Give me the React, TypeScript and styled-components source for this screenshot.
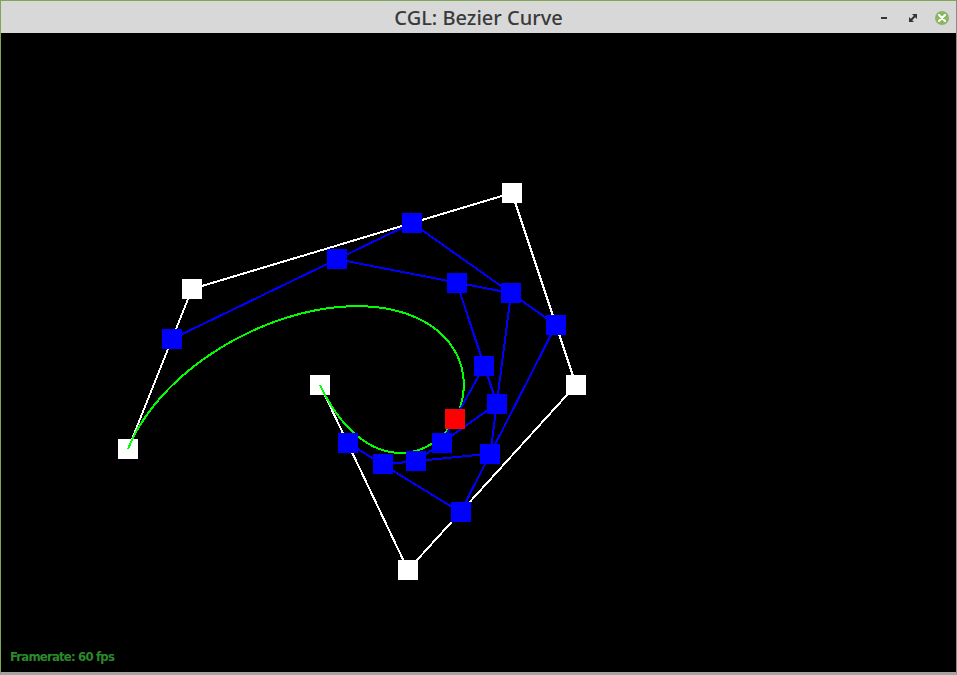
import React from "react";
import styled, { createGlobalStyle } from "styled-components";

const Global = createGlobalStyle`
  html, body { margin: 0; padding: 0; background: #000; }
  body { width: 957px; height: 675px; overflow: hidden; }
`;

type Pt = [number, number];

const CONTROL: Pt[] = [
  [128, 449],
  [192, 289],
  [512, 193],
  [576, 385],
  [408, 570],
  [320, 385],
];
const T = 0.6875;

const lerp = (a: Pt, b: Pt, t: number): Pt => [a[0] + (b[0] - a[0]) * t, a[1] + (b[1] - a[1]) * t];

function levels(pts: Pt[], t: number): Pt[][] {
  const out: Pt[][] = [pts];
  let cur = pts;
  while (cur.length > 1) {
    const next: Pt[] = [];
    for (let i = 0; i < cur.length - 1; i++) next.push(lerp(cur[i], cur[i + 1], t));
    out.push(next);
    cur = next;
  }
  return out;
}

function evalBezier(pts: Pt[], t: number): Pt {
  const l = levels(pts, t);
  return l[l.length - 1][0];
}

const Window = styled.div`
  box-sizing: border-box;
  width: 957px;
  height: 675px;
  display: flex;
  flex-direction: column;
  border-top: 1px solid #7fa650;
  border-left: 1px solid #7fa650;
  border-right: 1px solid #8a8a8a;
  border-bottom: 3px solid #a3a3a3;
  background: #000;
`;

const TitleBar = styled.div`
  height: 32px;
  flex: none;
  display: grid;
  grid-template-columns: 1fr auto 1fr;
  align-items: center;
  background: #d8d8d8;
`;

const Title = styled.div`
  grid-column: 2;
  font-family: "Noto Sans", "Open Sans", sans-serif;
  font-size: 20px;
  font-weight: 500;
  color: #3a3a3a;
  line-height: 32px;
  white-space: nowrap;
  padding-top: 1px;
`;

const Controls = styled.div`
  grid-column: 3;
  justify-self: end;
  display: flex;
  height: 32px;
`;

const CtrlButton = styled.div`
  width: 29px;
  height: 32px;
  display: flex;
  align-items: center;
  justify-content: center;
`;

const MinBar = styled.div`
  width: 6px;
  height: 2px;
  background: #353535;
`;

const CloseDot = styled.div`
  width: 14px;
  height: 14px;
  border-radius: 50%;
  background: #8db562;
  display: flex;
  align-items: center;
  justify-content: center;
`;

const Canvas = styled.div`
  position: relative;
  flex: 1;
  background: #000;
  overflow: hidden;
`;

const Scene = styled.svg`
  display: block;
`;

const Fps = styled.div`
  position: absolute;
  left: 9px;
  bottom: 8px;
  font-family: "DejaVu Sans Condensed", "DejaVu Sans", sans-serif;
  font-stretch: condensed;
  font-weight: bold;
  font-size: 13px;
  letter-spacing: -0.8px;
  color: #2b8a2b;
  line-height: 15px;
`;

const Square: React.FC<{ p: Pt; color: string }> = ({ p, color }) => (
  <rect x={Math.round(p[0] - 10)} y={Math.round(p[1] - 10)} width={20} height={20} fill={color} />
);

export default function App() {
  const lv = levels(CONTROL, T);
  const curve: Pt[] = [];
  for (let i = 0; i <= 200; i++) curve.push(evalBezier(CONTROL, i / 200));
  const poly = (pts: Pt[]) => pts.map((p) => `${p[0]},${p[1]}`).join(" ");
  const inner = lv.slice(1, lv.length - 1);
  const final = lv[lv.length - 1][0];

  return (
    <>
      <Global />
      <Window>
        <TitleBar>
          <Title>CGL: Bezier Curve</Title>
          <Controls>
            <CtrlButton>
              <MinBar />
            </CtrlButton>
            <CtrlButton>
              <svg width="8" height="8" viewBox="0 0 8 8">
                <polygon points="3,0 8,0 8,5" fill="#353535" />
                <polygon points="0,3 0,8 5,8" fill="#353535" />
                <line x1="1" y1="7" x2="7" y2="1" stroke="#353535" strokeWidth="2" />
              </svg>
            </CtrlButton>
            <CtrlButton>
              <CloseDot>
                <svg width="8" height="8" viewBox="0 0 8 8">
                  <path d="M1 1 L7 7 M7 1 L1 7" stroke="#fff" strokeWidth="2" strokeLinecap="round" />
                </svg>
              </CloseDot>
            </CtrlButton>
          </Controls>
        </TitleBar>
        <Canvas>
          <Scene width={955} height={639} viewBox="1 33 955 639" shapeRendering="crispEdges">
            <polyline points={poly(CONTROL)} fill="none" stroke="#fff" strokeWidth={2} />
            {CONTROL.map((p, i) => (
              <Square key={"c" + i} p={p} color="#fff" />
            ))}
            <polyline points={poly(curve)} fill="none" stroke="#00ff00" strokeWidth={2} />
            {inner.map((l, i) => (
              <polyline key={"l" + i} points={poly(l)} fill="none" stroke="#0000ff" strokeWidth={2} />
            ))}
            {inner.map((l, i) =>
              l.map((p, j) => <Square key={`b${i}-${j}`} p={p} color="#0000ff" />)
            )}
            <Square p={final} color="#ff0000" />
          </Scene>
          <Fps>Framerate: 60 fps</Fps>
        </Canvas>
      </Window>
    </>
  );
}
